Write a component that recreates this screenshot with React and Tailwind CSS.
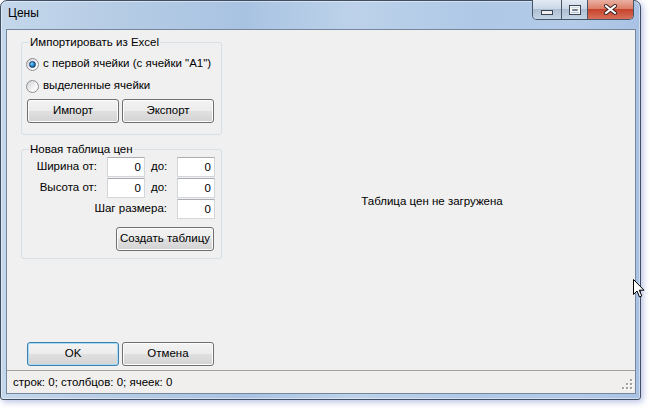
import React from 'react';

// Windows 7 style "Цены" dialog

const Btn = ({ children, def, className }) => (
    <div
        className={
            'h-[24px] flex items-center justify-center rounded-[3px] border bg-[linear-gradient(180deg,#f3f3f3_0%,#ececec_50%,#e0e0e0_50%,#d3d3d3_100%)] ' +
            (def
                ? 'border-[#3c7fb1] shadow-[inset_0_0_0_1px_#a6dcf5] '
                : 'border-[#707070] shadow-[inset_0_0_0_1px_#fcfcfc] ') +
            className
        }
    >
        {children}
    </div>
);

const Radio = ({ checked, label }) => (
    <div className="h-[22px] flex items-center pl-[4px]">
        <div className="w-[13px] h-[13px] rounded-full border border-[#8c8f94] bg-[linear-gradient(135deg,#cfd1d4_0%,#f4f4f4_60%,#ffffff_100%)] flex items-center justify-center">
            {checked && (
                <div className="w-[7px] h-[7px] rounded-full border border-[#173f6b] bg-[radial-gradient(circle_at_35%_35%,#8fd8ff_0%,#1f7fc8_50%,#0c3f78_100%)]" />
            )}
        </div>
        <span className="ml-[4px]">{label}</span>
    </div>
);

const TextBox = ({ value }) => (
    <div className="w-[38px] h-[20px] bg-white border border-[#d3d7dc] border-t-[#abadb3] text-right pr-[3px] leading-[18px]">
        {value}
    </div>
);

const GroupBox = ({ title, className, children }) => (
    <div className={'relative ml-[14px] w-[201px] border border-[#d5dfe5] rounded-[3px] ' + className}>
        <span className="absolute left-[7px] top-[-7px] px-[1px] bg-[#f0f0f0] leading-[13px]">{title}</span>
        {children}
    </div>
);

const TitleButtons = () => (
    <div className="-mt-[1px] mr-[2px] ml-auto flex h-[20px] border border-t-0 border-[#4a5566] rounded-b-[5px] overflow-hidden">
        <div className="w-[28px] flex items-end justify-center pb-[4px] bg-[linear-gradient(180deg,#e3ebf4_0%,#cbd8e7_45%,#aebfd3_50%,#c3d4e6_100%)]">
            <svg width="12" height="5">
                <rect x="0.5" y="0.5" width="11" height="4" fill="#eeeeee" stroke="#3a4452" />
            </svg>
        </div>
        <div className="w-[26px] flex items-center justify-center border-l border-[#4a5566] bg-[linear-gradient(180deg,#e3ebf4_0%,#cbd8e7_45%,#aebfd3_50%,#c3d4e6_100%)]">
            <svg width="12" height="10">
                <rect x="0.5" y="0.5" width="11" height="9" fill="none" stroke="#3a4452" />
                <rect x="1.5" y="1.5" width="9" height="7" fill="none" stroke="#f4f4f4" />
                <rect x="2.5" y="3.5" width="7" height="3" fill="none" stroke="#f4f4f4" />
                <rect x="3.5" y="4.5" width="5" height="1" fill="#3a4452" />
            </svg>
        </div>
        <div className="w-[46px] flex items-center justify-center border-l border-[#4a5566] bg-[linear-gradient(180deg,#eab0a3_0%,#dc7f68_45%,#c6432c_50%,#d8705a_100%)]">
            <svg width="13" height="11">
                <path d="M2 2 L11 9 M11 2 L2 9" stroke="#3a2020" strokeWidth="4" strokeLinecap="square" />
                <path d="M2 2 L11 9 M11 2 L2 9" stroke="#ffffff" strokeWidth="2" strokeLinecap="square" />
            </svg>
        </div>
    </div>
);

const SizeGrip = () => (
    <svg width="12" height="12" className="ml-auto self-end mb-[3px] mr-[2px]">
        {[
            [9, 1],
            [5, 5],
            [9, 5],
            [1, 9],
            [5, 9],
            [9, 9],
        ].map(([x, y]) => (
            <g key={x + '-' + y}>
                <rect x={x + 1} y={y + 1} width="2" height="2" fill="#ffffff" />
                <rect x={x} y={y} width="2" height="2" fill="#a3a3a3" />
            </g>
        ))}
    </svg>
);

export default function App() {
    return (
        <div className="w-[652px] h-[410px] bg-white relative overflow-hidden font-['Liberation_Sans',Arial,sans-serif] text-[11.5px] text-black">
            <div className="w-[641px] h-[400px] flex flex-col rounded-t-[7px] rounded-b-[3px] border border-[#3f4e62] bg-[linear-gradient(90deg,#c4d7eb_0%,#b6cce5_18%,#a8c3e2_38%,#bdd2ea_55%,#aec8e6_75%,#b3cbe8_90%,#a9c2e4_100%)] shadow-[inset_0_0_0_1px_rgba(255,255,255,0.45),2px_2px_6px_rgba(80,100,190,0.4)] pl-[5px] pr-[4px] pb-[5px]">
                {/* title bar */}
                <div className="h-[28px] flex items-start">
                    <span className="ml-[2px] mt-[4px] text-[12px] leading-[16px]">Цены</span>
                    <TitleButtons />
                </div>

                {/* client area */}
                <div className="flex-1 flex flex-col border border-[#74879c] bg-[#f0f0f0]">
                    <div className="flex-1 flex">
                        <div className="w-[222px] flex flex-col pt-[12px] pb-[4px]">
                            <GroupBox title="Импортировать из Excel" className="h-[93px] pt-[10px]">
                                <Radio checked label={'с первой ячейки (с ячейки "A1")'} />
                                <Radio label="выделенные ячейки" />
                                <div className="flex gap-[3px] pl-[5px] mt-[2px]">
                                    <Btn className="w-[92px]">Импорт</Btn>
                                    <Btn className="w-[92px]">Экспорт</Btn>
                                </div>
                            </GroupBox>

                            <GroupBox title="Новая таблица цен" className="h-[110px] mt-[14px] pt-[7px]">
                                <div className="flex flex-col gap-[1px]">
                                    <div className="h-[20px] flex items-center">
                                        <span className="w-[75px] text-right">Ширина от:</span>
                                        <div className="ml-[10px]"><TextBox value="0" /></div>
                                        <span className="ml-[6px] w-[16px]">до:</span>
                                        <div className="ml-[10px]"><TextBox value="0" /></div>
                                    </div>
                                    <div className="h-[20px] flex items-center">
                                        <span className="w-[75px] text-right">Высота от:</span>
                                        <div className="ml-[10px]"><TextBox value="0" /></div>
                                        <span className="ml-[6px] w-[16px]">до:</span>
                                        <div className="ml-[10px]"><TextBox value="0" /></div>
                                    </div>
                                    <div className="h-[20px] flex items-center">
                                        <span className="w-[145px] text-right">Шаг размера:</span>
                                        <div className="ml-[10px]"><TextBox value="0" /></div>
                                    </div>
                                </div>
                                <Btn className="w-[98px] ml-[94px] mt-[8px]">Создать таблицу</Btn>
                            </GroupBox>

                            <div className="flex-1" />

                            <div className="flex gap-[3px] ml-[20px]">
                                <Btn def className="w-[92px]">OK</Btn>
                                <Btn className="w-[92px]">Отмена</Btn>
                            </div>
                        </div>

                        <div className="flex-1 flex items-center justify-center pt-[3px]">
                            Таблица цен не загружена
                        </div>
                    </div>

                    {/* status bar */}
                    <div className="h-[23px] flex items-center border-t border-[#a0a0a0] bg-[#f1efed] pl-[6px]">
                        <span className="pt-[1px]">строк: 0; столбцов: 0; ячеек: 0</span>
                        <SizeGrip />
                    </div>
                </div>
            </div>

            {/* mouse pointer over the right frame */}
            <svg width="13" height="20" className="absolute left-[633px] top-[279px]">
                <path d="M0.5 0.5 L0.5 15.5 L4 12 L6.5 18 L8.8 17 L6.3 11.2 L11 11.2 Z" fill="#ffffff" stroke="#000000" strokeWidth="1" />
            </svg>
        </div>
    );
}
